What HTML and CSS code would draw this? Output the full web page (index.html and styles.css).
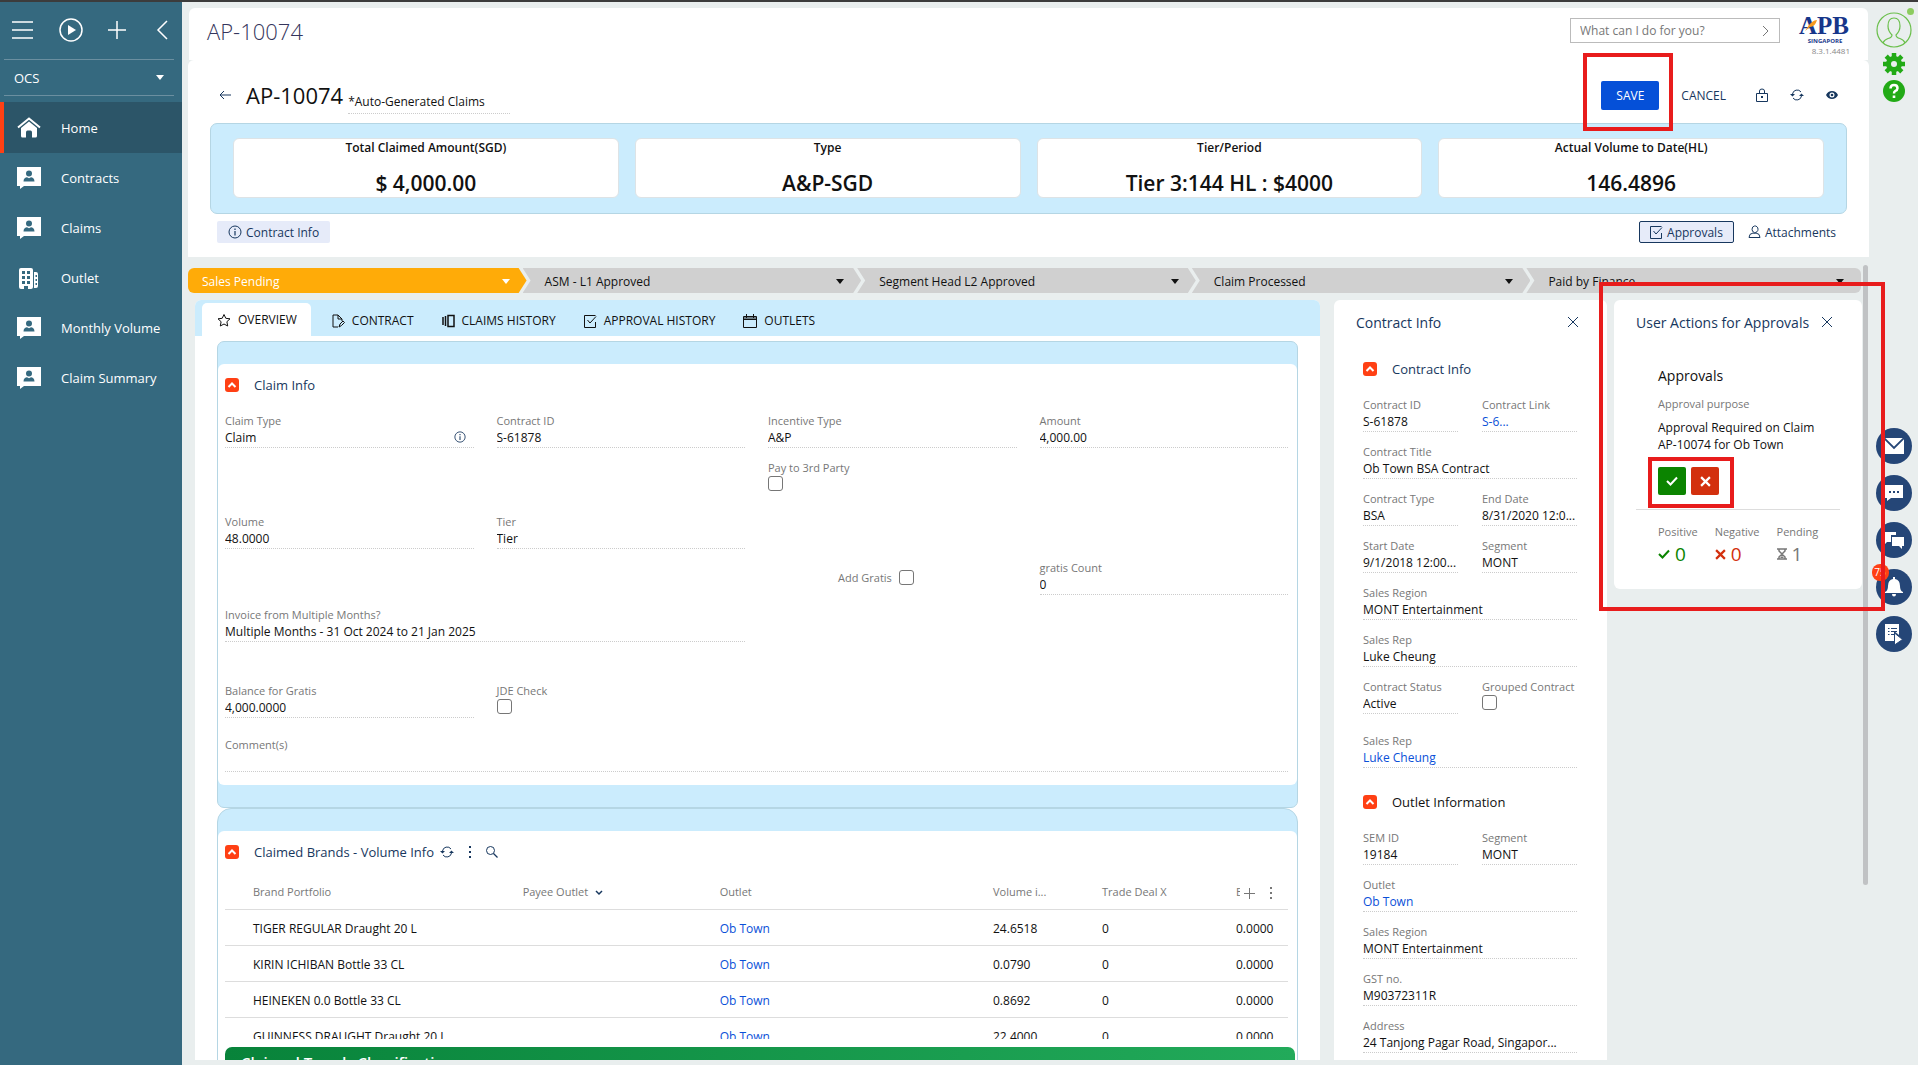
FILE: index.html
```html
<!DOCTYPE html>
<html lang="en">

<head>
  <meta charset="UTF-8">
  <meta name="viewport" content="width=device-width, initial-scale=1.0">
  <title>AP-10074</title>
  <link rel="stylesheet" href="styles.css">
</head>

<body>

  <!-- icon sprite -->
  <svg class="sprite" aria-hidden="true">
    <symbol id="i-card" viewBox="0 0 24 22">
      <path fill="currentColor" fill-rule="evenodd" d="M0 0h24v19H7l-4 3v-3H0zM12 3.500a3 3 0 1 0 0 6 3 3 0 0 0 0-6zM6.500 14.500h11c0-3-2-4-3.500-4.200l-2 1-2-1c-1.500.2-3.500 1.200-3.500 4.200z" />
    </symbol>
    <symbol id="i-home" viewBox="0 0 24 21">
      <path fill="none" stroke="currentColor" stroke-width="2" d="M1 10.500 12 1.500l11 9" />
      <path fill="currentColor" d="M12 4.500 4 11v8q0 1.500 1.500 1.500H9v-5q0-2 1.500-2h3q1.500 0 1.500 2v5h3.500q1.500 0 1.500-1.500v-8z" />
    </symbol>
    <symbol id="i-building" viewBox="0 0 20 21">
      <path fill="currentColor" fill-rule="evenodd" d="M2 0h10q2 0 2 2v17q0 2-2 2H9v-3H5v3H2q-2 0-2-2V2q0-2 2-2zM3 3v3h3V3zm5 0v3h3V3zM3 8v3h3V8zm5 0v3h3V8zM3 13v3h3v-3zm5 0v3h3v-3z" />
      <path fill="currentColor" fill-rule="evenodd" d="M15 4h2q2 0 2 2v12q0 2-2 2h-2zM16.500 7v2H18V7zm0 4v2H18v-2zm0 4v2H18v-2z" />
    </symbol>
    <symbol id="i-refresh" viewBox="0 0 14 12">
      <path fill="none" stroke="currentColor" stroke-width="1" d="M2.500 5a4.700 4.700 0 0 1 8.500-2M11.500 7A4.700 4.700 0 0 1 3 9" />
      <path fill="currentColor" d="M0 5h5L2.500 7.500zM14 7H9l2.500-2.500z" />
    </symbol>
    <symbol id="i-up" viewBox="0 0 14 14">
      <rect width="14" height="14" rx="3" fill="#ff4014" />
      <path fill="none" stroke="#fff" stroke-width="2" d="M3.500 9 7 5.500 10.500 9" />
    </symbol>
    <symbol id="i-close" viewBox="0 0 12 12">
      <path fill="none" stroke="currentColor" stroke-width="1" d="m1 1 10 10M11 1 1 11" />
    </symbol>
    <symbol id="i-info" viewBox="0 0 14 14">
      <circle cx="7" cy="7" r="6" fill="none" stroke="currentColor" stroke-width="1" />
      <path fill="none" stroke="currentColor" stroke-width="1.200" d="M7 6v4.500M7 3.500V5" />
    </symbol>
    <symbol id="i-check-doc" viewBox="0 0 13 14">
      <path fill="none" stroke="currentColor" stroke-width="1" d="M11.500 8v5.500H.5v-12h11M3.500 6 6 9l6-6.500" />
    </symbol>
    <symbol id="i-dots" viewBox="0 0 4 12">
      <path fill="currentColor" d="M1 0h2v2H1zM1 5h2v2H1zM1 10h2v2H1z" />
    </symbol>
    <symbol id="i-tick" viewBox="0 0 12 10">
      <path fill="none" stroke="currentColor" stroke-width="2" d="M1 5l3.500 3.500L11 1.500" />
    </symbol>
    <symbol id="i-cross" viewBox="0 0 10 10">
      <path fill="none" stroke="currentColor" stroke-width="2" d="m1 1 8 8M9 1 1 9" />
    </symbol>
  </svg>

  <nav class="sidebar">
    <div class="side-tools">
      <button aria-label="Menu"><svg width="22" height="18"><path d="M0 1h21M0 9h21M0 17h21" /></svg></button>
      <button aria-label="Run"><svg width="24" height="24"><circle cx="12" cy="12" r="11" /><path class="solid" d="m9 7 8 5-8 5z" /></svg></button>
      <button aria-label="Add"><svg width="18" height="18"><path d="M9 0v18M0 9h18" /></svg></button>
      <button aria-label="Collapse"><svg width="12" height="20"><path d="M11 1 2 10l9 9" /></svg></button>
    </div>
    <button class="workplace">OCS <i class="caret"></i></button>
    <ul class="menu">
      <li class="active"><a href="#"><svg width="24" height="21"><use href="#i-home" /></svg>Home</a></li>
      <li><a href="#"><svg width="24" height="22"><use href="#i-card" /></svg>Contracts</a></li>
      <li><a href="#"><svg width="24" height="22"><use href="#i-card" /></svg>Claims</a></li>
      <li><a href="#"><svg width="24" height="21"><use href="#i-building" /></svg>Outlet</a></li>
      <li><a href="#"><svg width="24" height="22"><use href="#i-card" /></svg>Monthly Volume</a></li>
      <li><a href="#"><svg width="24" height="22"><use href="#i-card" /></svg>Claim Summary</a></li>
    </ul>
  </nav>

  <main class="main">
    <header class="topbar">
      <div class="page-name">AP-10074</div>
      <div class="command">
        <input type="text" placeholder="What can I do for you?" aria-label="Command line">
        <button aria-label="Run command"><svg width="8" height="12"><path fill="none" stroke="#777" d="m1 1 5 5-5 5" /></svg></button>
      </div>
      <div class="brand">
        <svg width="54" height="28" viewBox="0 0 54 28">
          <text x="1" y="18" class="brand-name">APB</text>
          <path fill="#f59a22" d="M9 12q5-8 10-8-2 7-7 7l-5 4z" />
          <text x="27" y="27" class="brand-sub">SINGAPORE</text>
        </svg>
        <span>8.3.1.4481</span>
      </div>
    </header>

    <section class="record">
      <div class="record-head">
        <button class="icon-btn" aria-label="Back"><svg width="12" height="10"><path fill="none" stroke="currentColor" d="M12 5H1M5 1 1 5l4 4" /></svg></button>
        <h1>AP-10074</h1>
        <span class="subtitle">*Auto-Generated Claims</span>
        <div class="record-actions">
          <div class="save-wrap">
            <button class="save">SAVE</button>
            <div class="mark mark-save"></div>
          </div>
          <button class="cancel">CANCEL</button>
          <button class="icon-btn" aria-label="Lock"><svg width="12" height="14"><path fill="none" stroke="currentColor" d="M.5 5.500h11v8H.5zM3.500 5.500V3q0-2 2.500-2t2.500 2v2.500" /><path fill="currentColor" d="M5 8h2v2H5z" /></svg></button>
          <button class="icon-btn" aria-label="Refresh"><svg width="14" height="12"><use href="#i-refresh" /></svg></button>
          <button class="icon-btn" aria-label="View"><svg width="12" height="10" viewBox="0 0 12 10"><path fill="currentColor" fill-rule="evenodd" d="M6 1q4 0 6 4-2 4-6 4T0 5q2-4 6-4zm0 1.500a2.500 2.500 0 1 0 0 5 2.500 2.500 0 0 0 0-5z" /><circle cx="6" cy="5" r="1.300" fill="currentColor" /></svg></button>
        </div>
      </div>

      <div class="summary">
        <div class="summary-card"><h2>Total Claimed Amount(SGD)</h2><p>$ 4,000.00</p></div>
        <div class="summary-card"><h2>Type</h2><p>A&amp;P-SGD</p></div>
        <div class="summary-card"><h2>Tier/Period</h2><p>Tier 3:144 HL : $4000</p></div>
        <div class="summary-card"><h2>Actual Volume to Date(HL)</h2><p>146.4896</p></div>
      </div>

      <div class="toggles">
        <button class="toggle on"><svg width="14" height="14"><use href="#i-info" /></svg>Contract Info</button>
        <button class="toggle on focus"><svg width="13" height="14"><use href="#i-check-doc" /></svg>Approvals</button>
        <button class="toggle"><svg width="13" height="14"><path fill="none" stroke="currentColor" d="M6.500 1a3 3.300 0 1 1 0 6.500 3 3.300 0 0 1 0-6.500zM1 12.500q0-4 4-4.500l1.500.5L8 8q4 .5 4 4.500z" /></svg>Attachments</button>
      </div>
    </section>

    <div class="body">
      <div class="content">
        <div class="stages">
          <button class="stage current">Sales Pending <i class="caret"></i></button>
          <button class="stage">ASM - L1 Approved <i class="caret"></i></button>
          <button class="stage">Segment Head L2 Approved <i class="caret"></i></button>
          <button class="stage">Claim Processed <i class="caret"></i></button>
          <button class="stage">Paid by Finance <i class="caret"></i></button>
        </div>

        <div class="columns">
          <section class="detail">
            <div class="tabs">
              <button class="tab active"><svg width="14" height="14"><path d="m7 1.500 1.800 3.800 4.200.5-3.100 2.900.8 4.300L7 11l-3.700 2 .8-4.300L1 5.800l4.200-.5z" /></svg>OVERVIEW</button>
              <button class="tab"><svg width="13" height="14"><path d="M6 13H1V1h5l4 4v2M6 1v4h4M7 13l1-3 3-3 1.500 1.500-3 3z" /></svg>CONTRACT</button>
              <button class="tab"><svg width="13" height="14"><path d="M1 3v8M3.500 2v10M6 1.500h6v11H6z" stroke-width="1.500" /></svg>CLAIMS HISTORY</button>
              <button class="tab"><svg width="13" height="14"><use href="#i-check-doc" /></svg>APPROVAL HISTORY</button>
              <button class="tab"><svg width="14" height="14"><path d="M.5 2.500h13v11H.5zM.5 5.500h13M3.500 0v4M10.500 0v4M.5 4h13" /></svg>OUTLETS</button>
            </div>

            <div class="detail-body">
              <div class="group">
                <div class="group-inner">
                  <div class="section-head">
                    <button aria-label="Collapse Claim Info"><svg width="14" height="14"><use href="#i-up" /></svg></button>
                    <h3>Claim Info</h3>
                  </div>
                  <div class="claim-grid">
                    <div class="field has-icon">
                      <label for="claimType">Claim Type</label>
                      <input id="claimType" value="Claim">
                      <svg class="field-icon" width="12" height="12" viewBox="0 0 14 14"><use href="#i-info" /></svg>
                    </div>
                    <div class="field"><label for="contractId">Contract ID</label><input id="contractId" value="S-61878"></div>
                    <div class="field"><label for="incentive">Incentive Type</label><input id="incentive" value="A&amp;P"></div>
                    <div class="field"><label for="amount">Amount</label><input id="amount" value="4,000.00"></div>

                    <div class="field check row-2 col-3"><label for="thirdParty">Pay to 3rd Party</label><input type="checkbox" id="thirdParty"></div>

                    <div class="field row-3"><label for="volume">Volume</label><input id="volume" value="48.0000"></div>
                    <div class="field row-3"><label for="tier">Tier</label><input id="tier" value="Tier"></div>

                    <div class="field-inline row-4 col-3"><label for="addGratis">Add Gratis</label><input type="checkbox" id="addGratis"></div>
                    <div class="field row-4 col-4"><label for="gratisCount">gratis Count</label><input id="gratisCount" value="0"></div>

                    <div class="field row-5 span-2"><label for="invoice">Invoice from Multiple Months?</label><input id="invoice" value="Multiple Months - 31 Oct 2024 to 21 Jan 2025"></div>

                    <div class="field row-6"><label for="balance">Balance for Gratis</label><input id="balance" value="4,000.0000"></div>
                    <div class="field check row-6"><label for="jde">JDE Check</label><input type="checkbox" id="jde"></div>

                    <div class="field row-7 span-4"><label for="comments">Comment(s)</label><input id="comments" value=""></div>
                  </div>
                </div>
              </div>

              <div class="group brands">
                <div class="group-inner">
                  <div class="section-head">
                    <button aria-label="Collapse Claimed Brands"><svg width="14" height="14"><use href="#i-up" /></svg></button>
                    <h3>Claimed Brands - Volume Info</h3>
                    <div class="head-tools">
                      <button aria-label="Refresh list"><svg width="14" height="12"><use href="#i-refresh" /></svg></button>
                      <button aria-label="List actions"><svg width="4" height="12"><use href="#i-dots" /></svg></button>
                      <button aria-label="Search list"><svg width="12" height="12"><g fill="none" stroke="currentColor"><circle cx="4.500" cy="4.500" r="4" stroke-width="1" /><path stroke-width="1.300" d="m7.500 7.500 4 4" /></g></svg></button>
                    </div>
                  </div>
                  <div class="table-clip">
                    <table class="brand-table">
                      <thead>
                        <tr>
                          <th>Brand Portfolio</th>
                          <th>Payee Outlet <svg width="8" height="6"><path fill="none" stroke="#17375e" stroke-width="1.500" d="m1 1 3 3 3-3" /></svg></th>
                          <th>Outlet</th>
                          <th>Volume i...</th>
                          <th>Trade Deal X</th>
                          <th>
                            <div class="th-tools">
                              <span>E</span>
                              <button aria-label="Add row"><svg width="11" height="11"><path stroke="currentColor" d="M5.500 0v11M0 5.500h11" /></svg></button>
                              <button aria-label="Row actions"><svg width="4" height="12"><use href="#i-dots" /></svg></button>
                            </div>
                          </th>
                        </tr>
                      </thead>
                      <tbody>
                        <tr><td>TIGER REGULAR Draught 20 L</td><td></td><td><a href="#">Ob Town</a></td><td>24.6518</td><td>0</td><td>0.0000</td></tr>
                        <tr><td>KIRIN ICHIBAN Bottle 33 CL</td><td></td><td><a href="#">Ob Town</a></td><td>0.0790</td><td>0</td><td>0.0000</td></tr>
                        <tr><td>HEINEKEN 0.0 Bottle 33 CL</td><td></td><td><a href="#">Ob Town</a></td><td>0.8692</td><td>0</td><td>0.0000</td></tr>
                        <tr><td>GUINNESS DRAUGHT Draught 20 L</td><td></td><td><a href="#">Ob Town</a></td><td>22.4000</td><td>0</td><td>0.0000</td></tr>
                      </tbody>
                    </table>
                  </div>
                  <div class="trends">Claimed Trends Classification</div>
                </div>
              </div>
            </div>
          </section>

          <aside class="contract">
            <div class="aside-head">
              <h2>Contract Info</h2>
              <button aria-label="Close Contract Info"><svg width="12" height="12"><use href="#i-close" /></svg></button>
            </div>
            <div class="section-head">
              <button aria-label="Collapse Contract Info"><svg width="14" height="14"><use href="#i-up" /></svg></button>
              <h3>Contract Info</h3>
            </div>
            <div class="contract-grid">
              <div class="field"><label for="cId">Contract ID</label><input id="cId" value="S-61878"></div>
              <div class="field"><span class="name">Contract Link</span><a href="#">S-6...</a></div>
              <div class="field wide"><label for="cTitle">Contract Title</label><input id="cTitle" value="Ob Town BSA Contract"></div>
              <div class="field"><label for="cType">Contract Type</label><input id="cType" value="BSA"></div>
              <div class="field"><label for="cEnd">End Date</label><input id="cEnd" value="8/31/2020 12:0..."></div>
              <div class="field"><label for="cStart">Start Date</label><input id="cStart" value="9/1/2018 12:00..."></div>
              <div class="field"><label for="cSegment">Segment</label><input id="cSegment" value="MONT"></div>
              <div class="field wide"><label for="cRegion">Sales Region</label><input id="cRegion" value="MONT Entertainment"></div>
              <div class="field wide"><label for="cRep">Sales Rep</label><input id="cRep" value="Luke Cheung"></div>
              <div class="field"><label for="cStatus">Contract Status</label><input id="cStatus" value="Active"></div>
              <div class="field check"><label for="cGrouped">Grouped Contract</label><input type="checkbox" id="cGrouped"></div>
              <div class="field wide spaced"><span class="name">Sales Rep</span><a href="#">Luke Cheung</a></div>
            </div>
            <div class="section-head outlet-head">
              <button aria-label="Collapse Outlet Information"><svg width="14" height="14"><use href="#i-up" /></svg></button>
              <h3>Outlet Information</h3>
            </div>
            <div class="contract-grid">
              <div class="field"><label for="oSem">SEM ID</label><input id="oSem" value="19184"></div>
              <div class="field"><label for="oSegment">Segment</label><input id="oSegment" value="MONT"></div>
              <div class="field wide"><span class="name">Outlet</span><a href="#">Ob Town</a></div>
              <div class="field wide"><label for="oRegion">Sales Region</label><input id="oRegion" value="MONT Entertainment"></div>
              <div class="field wide"><label for="oGst">GST no.</label><input id="oGst" value="M90372311R"></div>
              <div class="field wide"><label for="oAddress">Address</label><input id="oAddress" value="24 Tanjong Pagar Road, Singapor..."></div>
            </div>
          </aside>

          <aside class="approvals">
            <div class="aside-head">
              <h2>User Actions for Approvals</h2>
              <button aria-label="Close approvals"><svg width="12" height="12"><use href="#i-close" /></svg></button>
            </div>
            <div class="approval">
              <h3>Approvals</h3>
              <p class="muted">Approval purpose</p>
              <p class="purpose">Approval Required on Claim AP-10074 for Ob Town</p>
              <div class="decision">
                <button class="yes" aria-label="Approve"><svg width="12" height="10"><use href="#i-tick" /></svg></button>
                <button class="no" aria-label="Reject"><svg width="11" height="11" viewBox="0 0 10 10"><use href="#i-cross" /></svg></button>
                <div class="mark mark-decision"></div>
              </div>
            </div>
            <div class="votes">
              <div class="positive"><span>Positive</span><b><svg width="12" height="10"><use href="#i-tick" /></svg>0</b></div>
              <div class="negative"><span>Negative</span><b><svg width="11" height="11" viewBox="0 0 10 10"><use href="#i-cross" /></svg>0</b></div>
              <div class="pending"><span>Pending</span><b><svg width="10" height="12"><path fill="none" stroke="currentColor" stroke-width="1.500" d="M0 1h10M0 11h10M2 1v2l3 3 3-3V1M2 11V9l3-3 3 3v2" /><path fill="currentColor" d="M3 10h4L5 8z" /></svg>1</b></div>
            </div>
            <div class="mark mark-approvals"></div>
          </aside>
        </div>
      </div>
      <div class="scroll-thumb"></div>
    </div>
  </main>

  <aside class="rail">
    <button class="avatar" aria-label="Profile">
      <svg width="36" height="36"><g fill="none" stroke="#6abf4b" stroke-width="1.200"><circle cx="18" cy="18" r="17" /><path d="M7 31q1-3 5-4.500 4-1 4-3.500-4-4-4-9 0-8 6-8t6 8q0 5-4 9 0 2.500 4 3.500 4 1.500 5 4.500" /></g></svg>
      <i class="online"></i>
    </button>
    <button aria-label="Settings"><svg width="22" height="22" viewBox="0 0 22 22"><circle cx="11" cy="11" r="5.500" fill="none" stroke="#22aa16" stroke-width="5" /><path stroke="#22aa16" stroke-width="4.500" d="M11 0v4M11 18v4M0 11h4M18 11h4M3.200 3.200 6 6M16 16l2.800 2.800M3.200 18.800 6 16M16 6l2.800-2.800" /></svg></button>
    <button aria-label="Help"><svg width="22" height="22"><circle cx="11" cy="11" r="11" fill="#22aa16" /><path fill="none" stroke="#fff" stroke-width="2.500" d="M7.500 8.500Q7.500 5 11 5t3.500 3.200Q14.500 10 12 11.200q-1 .6-1 2.300" /><path fill="#fff" d="M9.700 15.500h2.600V18H9.700z" /></svg></button>
    <div class="rail-panel">
      <button class="round" aria-label="Mail"><svg width="20" height="16"><path fill="#fff" d="M0 0h20v16H0z" /><path fill="none" stroke="#254677" stroke-width="1.800" d="m0 0 10 10L20 0" /></svg></button>
      <button class="round" aria-label="Chat"><svg width="18" height="16"><path fill="#fff" d="M0 0h18v13H6l-4 3v-3H0z" /><path fill="#254677" d="M4 6h2v2H4zM8 6h2v2H8zM12 6h2v2h-2z" /></svg></button>
      <button class="round" aria-label="Feed"><svg width="21" height="17"><path fill="#fff" d="M0 0h13v3H8v7H4l-3 3v-3H0zM9 5h12v9h-2v3l-3-3H9z" /></svg></button>
      <button class="round" aria-label="Notifications"><svg width="18" height="20"><path fill="#fff" d="M8 0h2v2q5 1 5 7 0 5 3 6v1H0v-1q3-1 3-6 0-6 5-7zM7 17h4q0 2.500-2 2.500T7 17z" /></svg><span class="badge">75</span></button>
      <button class="round" aria-label="Processes"><svg width="18" height="21"><path fill="#fff" d="M0 0h14v11l-5-4v10H0z" /><path stroke="#254677" stroke-width="1.200" d="M3 4.500h1.500M6 4.500h6M3 7.500h1.500M6 7.500h6M3 10.500h1.500M6 10.500h3" /><path fill="#fff" stroke="#254677" d="m9.500 9 8 6.500-8 5.500z" /></svg></button>
    </div>
  </aside>

</body>

</html>
```
FILE: styles.css
```css
* {
  margin: 0;
  padding: 0;
  box-sizing: border-box;
}

body {
  display: flex;
  height: 100vh;
  overflow: hidden;
  border-top: 2px solid #3c3c3c;
  background: #e9eeee;
  color: #111;
  font-family: "Open Sans", "Noto Sans", sans-serif;
  font-size: 12px;
}

li {
  list-style: none;
}

a {
  color: #0a50d8;
  text-decoration: none;
}

button {
  border: 0;
  background: none;
  color: inherit;
  font: inherit;
  cursor: pointer;
}

svg {
  display: block;
  flex: none;
}

h1,
h2,
h3 {
  font-weight: 400;
}

.sprite {
  position: absolute;
  width: 0;
  height: 0;
}

.caret {
  border: 4px solid transparent;
  border-top: 5px solid currentColor;
  border-bottom: 0;
}

/* red call-out frames over the page */
.mark {
  position: absolute;
  border: 4px solid #e81c1c;
  pointer-events: none;
  z-index: 5;
}

/* sidebar */
.sidebar {
  width: 182px;
  flex: none;
  background: #35697f;
  color: #fff;
}

.side-tools {
  display: flex;
  align-items: center;
  gap: 25px;
  height: 58px;
  margin: 0 8px 0 4px;
  padding: 0 6px 2px 8px;
  border-bottom: 1px solid #6b8fa0;
}

.side-tools button:last-child {
  margin-left: auto;
}

.side-tools svg {
  fill: none;
  stroke: #fff;
  stroke-width: 1.5;
}

.side-tools .solid {
  fill: #fff;
  stroke: none;
}

.workplace {
  display: flex;
  align-items: center;
  justify-content: space-between;
  width: 170px;
  height: 36px;
  margin: 0 8px 6px 4px;
  padding: 0 10px;
  border-bottom: 1px solid #6b8fa0;
  font-size: 13px;
}

.menu a {
  display: flex;
  align-items: center;
  gap: 20px;
  height: 50px;
  padding-left: 17px;
  color: #fff;
  font-size: 13px;
}

.menu .active a {
  height: 51px;
  padding-left: 13px;
  border-left: 4px solid #ff4014;
  background: #2c5568;
}

/* main column */
.main {
  display: flex;
  flex-direction: column;
  flex: 1;
  min-width: 0;
  padding: 6px 0 5px 6px;
}

.topbar {
  display: flex;
  align-items: flex-start;
  height: 52px;
  margin: 0 1px;
  padding: 10px 16px 0 18px;
  border-radius: 6px 6px 0 0;
  background: #fff;
}

.page-name {
  flex: 1;
  color: #35355c;
  font-size: 22px;
  font-weight: 300;
  line-height: 26px;
}

.command {
  display: flex;
  align-items: center;
  width: 210px;
  height: 25px;
  margin-right: 18px;
  padding: 0 9px;
  border: 1px solid #bbb;
}

.command input {
  flex: 1;
  min-width: 0;
  border: 0;
  outline: 0;
  font: inherit;
}

.command input::placeholder {
  color: #777;
}

.brand {
  display: flex;
  flex-direction: column;
  align-items: flex-end;
  width: 54px;
  margin-top: -2px;
}

.brand-name {
  fill: #17368a;
  font: 700 25px "Liberation Serif", serif;
}

.brand-sub {
  fill: #17368a;
  font: 700 6px "Open Sans", sans-serif;
  text-anchor: middle;
}

.brand span {
  padding-right: 2px;
  color: #888;
  font-size: 8px;
  line-height: 14px;
}

.record {
  height: 197px;
  padding: 10px 22px 0;
  border-radius: 6px 6px 0 0;
  background: #fff;
}

.record-head {
  display: flex;
  align-items: center;
  height: 50px;
  padding-left: 9px;
}

.icon-btn {
  color: #17375e;
}

.record-head h1 {
  margin: 0 5px 0 15px;
  font-size: 22px;
}

.subtitle {
  align-self: flex-end;
  width: 162px;
  height: 25px;
  margin-bottom: 6px;
  line-height: 26px;
  border-bottom: 1px dotted #ccc;
}

.record-actions {
  display: flex;
  align-items: center;
  gap: 22px;
  margin-left: auto;
  padding-right: 9px;
}

.save-wrap {
  position: relative;
}

.save {
  display: block;
  width: 58px;
  height: 29px;
  border-radius: 2px;
  background: #0550d8;
  color: #fff;
}

.mark-save {
  inset: -28px -14px -21px -18px;
}

.cancel {
  margin-right: 8px;
  color: #17375e;
}

.summary {
  display: grid;
  grid-template-columns: repeat(4, 1fr);
  gap: 16px;
  height: 91px;
  margin-top: 3px;
  padding: 14px 22px 16px;
  border: 1px solid #b5d6e4;
  border-radius: 7px;
  background: #cbecfd;
}

.summary-card {
  border: 1px solid #dde3e6;
  border-radius: 6px;
  background: #fff;
  text-align: center;
}

.summary-card h2 {
  font-size: 12px;
  font-weight: 600;
  line-height: 17px;
}

.summary-card p {
  margin-top: 13px;
  font-size: 21px;
  font-weight: 600;
  line-height: 28px;
}

.toggles {
  display: flex;
  gap: 5px;
  margin: 7px 2px 0 7px;
}

.toggle {
  display: flex;
  align-items: center;
  gap: 4px;
  height: 22px;
  padding: 0 8px;
  border: 1px solid transparent;
  border-radius: 2px;
  color: #17375e;
}

.toggle.on {
  padding: 0 10px;
  background: #e6ebf9;
}

.toggle.focus {
  margin-left: auto;
  border-color: #17375e;
}

/* area under the record header */
.body {
  display: flex;
  flex: 1;
  min-height: 0;
}

.content {
  display: flex;
  flex-direction: column;
  flex: 1;
  min-width: 0;
  padding-top: 11px;
}

.scroll-thumb {
  width: 5px;
  height: 620px;
  margin: 8px 1px 0 2px;
  border-radius: 3px;
  background: #c0c2c4;
}

.stages {
  display: grid;
  grid-template-columns: repeat(5, 1fr);
  height: 25px;
  flex: none;
}

.stage {
  display: flex;
  align-items: center;
  justify-content: space-between;
  margin-right: -4px;
  padding: 2px 17px 0 22px;
  background: #d0d0d0;
  clip-path: polygon(0 0, calc(100% - 8px) 0, 100% 50%, calc(100% - 8px) 100%, 0 100%, 8px 50%);
}

.stage.current {
  padding-left: 14px;
  border-radius: 6px 0 0 6px;
  background: #ffab08;
  color: #fff;
  clip-path: polygon(0 0, calc(100% - 8px) 0, 100% 50%, calc(100% - 8px) 100%, 0 100%);
}

.stage:last-child {
  margin-right: 0;
  border-radius: 0 6px 6px 0;
  clip-path: polygon(0 0, 100% 0, 100% 100%, 0 100%, 8px 50%);
}

.columns {
  display: flex;
  flex: 1;
  min-height: 0;
  padding: 7px 0 0 7px;
}

.detail {
  display: flex;
  flex-direction: column;
  flex: 1;
  min-width: 0;
  border-radius: 6px 6px 0 0;
  background: #fff;
  overflow: hidden;
}

.tabs {
  display: flex;
  flex: none;
  height: 36px;
  padding: 3px 7px 0;
  background: #cbecfd;
}

.tab {
  display: flex;
  align-items: center;
  gap: 7px;
  padding: 2px 14px 0;
  color: #111;
}

.tab.active {
  margin-right: 7px;
  padding: 0 14px 0 15px;
  border-radius: 5px 5px 0 0;
  background: #fff;
}

.tab svg {
  fill: none;
  stroke: currentColor;
}

.detail-body {
  flex: 1;
  min-height: 0;
  padding: 5px 22px 0;
  overflow: hidden;
}

.group {
  padding: 22px 0;
  border: 1px solid #b5d6e4;
  border-radius: 7px;
  background: #cbecfd;
}

.group.brands {
  border-radius: 14px 14px 0 0;
}

.group-inner {
  padding: 11px 9px 13px 7px;
  border-radius: 6px;
  background: #fff;
}

.section-head {
  display: flex;
  align-items: center;
  height: 20px;
  margin-bottom: 18px;
}

.section-head h3 {
  margin-left: 15px;
  color: #17375e;
  font-size: 13px;
}

.head-tools {
  display: flex;
  align-items: center;
  gap: 14px;
  margin-left: 6px;
  color: #17375e;
}

.claim-grid {
  display: grid;
  grid-template-columns: repeat(4, 1fr);
  grid-template-rows: 47px 54px 46px 47px 76px 54px 35px;
  column-gap: 23px;
}

/* label over value, dotted rule under it */
.field {
  position: relative;
  height: 35px;
  border-bottom: 1px dotted #ccc;
}

.field label,
.field .name {
  display: block;
  color: #777;
  font-size: 11px;
  line-height: 16px;
}

.field input:not([type=checkbox]),
.field a {
  display: block;
  width: 100%;
  height: 18px;
  border: 0;
  outline: 0;
  background: none;
  color: #111;
  font: inherit;
  line-height: 18px;
}

.field a {
  color: #0a50d8;
}

.field.check {
  border-bottom: 0;
}

input[type=checkbox] {
  display: block;
  appearance: none;
  width: 15px;
  height: 15px;
  border: 1px solid #767676;
  border-radius: 3px;
  background: #fff;
}

.field-icon {
  position: absolute;
  right: 8px;
  bottom: 4px;
  color: #17375e;
}

.field-inline {
  display: flex;
  align-items: center;
  gap: 7px;
  height: 35px;
  padding-left: 70px;
  color: #777;
  font-size: 11px;
}

.row-2 {
  grid-row: 2;
}

.row-3 {
  grid-row: 3;
}

.row-4 {
  grid-row: 4;
}

.row-5 {
  grid-row: 5;
}

.row-6 {
  grid-row: 6;
}

.row-7 {
  grid-row: 7;
}

.col-3 {
  grid-column: 3;
}

.col-4 {
  grid-column: 4;
}

.span-2 {
  grid-column: 1 / span 2;
}

.span-4 {
  grid-column: 1 / span 4;
}

/* claimed brands table */
.brands .section-head {
  margin-bottom: 13px;
}

.brands .group-inner {
  padding-bottom: 0;
}

.table-clip {
  height: 164px;
  overflow: hidden;
}

.brand-table {
  width: 100%;
  border-collapse: collapse;
  table-layout: fixed;
}

.brand-table th,
.brand-table td {
  height: 36px;
  padding-top: 2px;
  border-bottom: 1px solid #ddd;
  text-align: left;
  font-weight: 400;
  white-space: nowrap;
}

.brand-table th {
  height: 34px;
  padding-top: 0;
  color: #777;
  font-size: 11px;
}

.brand-table th:nth-child(1) {
  width: 28%;
}

.brand-table th:nth-child(2) {
  width: 197px;
}

.brand-table th:nth-child(4) {
  width: 109px;
}

.brand-table th:nth-child(5) {
  width: 134px;
}

.brand-table th:nth-child(6) {
  width: 52px;
}

.brand-table th:first-child,
.brand-table td:first-child {
  padding-left: 28px;
}

.brand-table th svg {
  display: inline-block;
  margin-left: 4px;
  vertical-align: middle;
}

.th-tools {
  display: flex;
  align-items: center;
}

.th-tools span {
  width: 4px;
  overflow: hidden;
}

.th-tools button {
  margin-right: 10px;
}

.trends {
  height: 60px;
  margin: 8px -7px 0 0;
  padding: 5px 16px;
  border-radius: 7px 7px 0 0;
  background: linear-gradient(90deg, #08833a, #22aa5a);
  color: #fff;
  font-size: 15px;
  font-weight: 600;
}

/* side panels */
.contract,
.approvals {
  flex: none;
  border-radius: 6px;
  background: #fff;
}

.contract {
  width: 273px;
  margin-left: 14px;
  padding: 12px 30px 0 29px;
  border-radius: 6px 6px 0 0;
}

.aside-head {
  display: flex;
  align-items: center;
  justify-content: space-between;
  height: 20px;
  color: #17375e;
}

.aside-head h2 {
  font-size: 14px;
}

.contract .aside-head {
  margin: 0 -2px 27px -7px;
}

.contract-grid {
  display: grid;
  grid-template-columns: 1fr 1fr;
  gap: 12px 24px;
}

.wide {
  grid-column: 1 / span 2;
}

.spaced {
  margin-top: 7px;
}

.outlet-head {
  margin-top: 24px;
}

.outlet-head h3 {
  color: #111;
}

.approvals {
  position: relative;
  align-self: flex-start;
  width: 248px;
  height: 289px;
  margin: 0 -1px 0 7px;
  padding: 12px 22px 0;
}

.approvals .aside-head {
  padding-right: 7px;
}

.approval {
  height: 178px;
  padding: 34px 20px 0 22px;
  border-bottom: 1px solid #ddd;
}

.approval h3 {
  font-size: 14px;
  line-height: 20px;
}

.muted {
  margin-top: 10px;
  color: #777;
  font-size: 11px;
  line-height: 16px;
}

.purpose {
  margin-top: 7px;
  line-height: 17px;
}

.decision {
  position: relative;
  display: flex;
  gap: 5px;
  width: 62px;
  margin-top: 14px;
}

.decision button {
  display: flex;
  align-items: center;
  justify-content: center;
  width: 28px;
  height: 28px;
  border-radius: 2px;
  color: #fff;
}

.yes {
  background: #0b8400;
}

.no {
  background: #d3300e;
}

.mark-decision {
  inset: -10px -14px -13px -10px;
}

.mark-approvals {
  inset: -18px -23px -22px -15px;
}

.votes {
  display: flex;
  gap: 17px;
  padding: 14px 0 0 22px;
}

.votes span {
  display: block;
  color: #777;
  font-size: 11px;
  line-height: 16px;
}

.votes b {
  display: flex;
  align-items: center;
  gap: 5px;
  font-size: 19px;
  font-weight: 400;
  line-height: 28px;
}

.positive b {
  color: #0b8400;
}

.negative b {
  color: #d3300e;
}

.pending b {
  color: #777;
}

/* right rail */
.rail {
  display: flex;
  flex-direction: column;
  align-items: center;
  gap: 5px;
  width: 49px;
  flex: none;
  padding-top: 10px;
}

.avatar {
  position: relative;
}

.online {
  position: absolute;
  top: -4px;
  right: -2px;
  width: 7px;
  height: 7px;
  border-radius: 50%;
  background: #8ccc5f;
}

.rail-panel {
  display: flex;
  flex-direction: column;
  gap: 11px;
  margin-top: 321px;
}

.round {
  position: relative;
  display: flex;
  align-items: center;
  justify-content: center;
  width: 36px;
  height: 36px;
  border-radius: 50%;
  background: #254677;
}

.badge {
  position: absolute;
  top: -5px;
  left: -4px;
  width: 17px;
  border-radius: 8px;
  background: #ff4014;
  color: #fff;
  font-size: 10px;
  line-height: 17px;
}
```
